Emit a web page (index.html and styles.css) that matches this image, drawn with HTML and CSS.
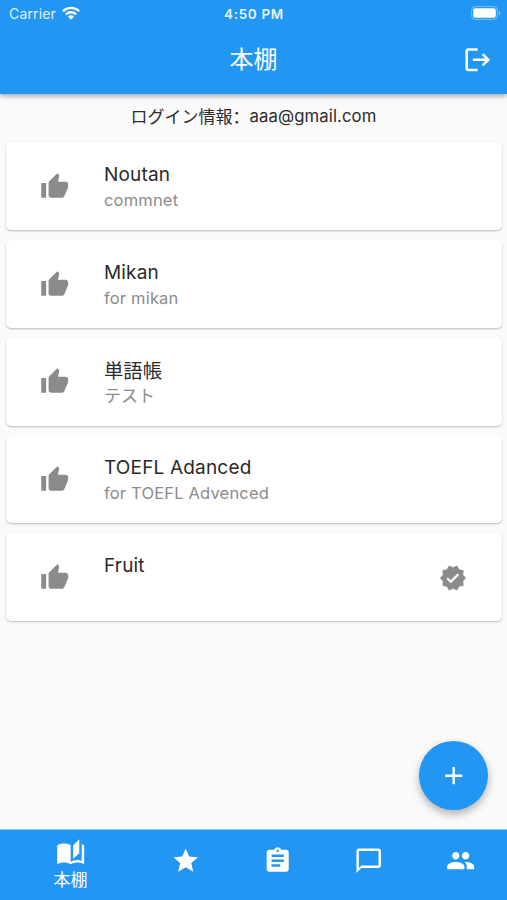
FILE: index.html
```html
<!DOCTYPE html>
<html lang="ja">
<head>
<meta charset="utf-8">
<title>本棚</title>
<link rel="stylesheet" href="styles.css">
</head>
<body>
<svg width="0" height="0" class="defs">
  <symbol id="thumb" viewBox="0 0 24 24"><path d="M1 21h4V9H1v12zm22-11c0-1.1-.9-2-2-2h-6.31l.95-4.57.03-.32c0-.41-.17-.79-.44-1.06L14.17 1 7.59 7.59C7.22 7.95 7 8.45 7 9v10c0 1.1.9 2 2 2h9c.83 0 1.54-.5 1.84-1.22l3.02-7.05c.09-.23.14-.47.14-.73v-2z"/></symbol>
</svg>
<div class="screen">
  <header class="header">
    <div class="status">
      <div class="carrier"><span>Carrier</span>
        <svg class="wifi" viewBox="0 0 18 14"><g fill="none" stroke="#fff" stroke-width="2.3"><path d="M.9 5.3a11.5 11.5 0 0 1 16.2 0"/><path d="M3.8 8.4a7.4 7.4 0 0 1 10.4 0"/></g><path d="M9 13.8l-3-3.1a4.3 4.3 0 0 1 6 0z" fill="#fff"/></svg>
      </div>
      <div class="clock">4:50 PM</div>
      <svg class="battery" viewBox="0 0 30 14"><rect x=".6" y=".6" width="25.8" height="12.8" rx="3.8" fill="none" stroke="#fff" stroke-opacity=".4" stroke-width="1"/><rect x="2.2" y="2.2" width="22.6" height="9.6" rx="2.2" fill="#fff"/><path d="M27.8 4.8c2 .8 2 3.6 0 4.4z" fill="#fff" fill-opacity=".45"/></svg>
    </div>
    <div class="bar">
      <h1 class="title">本棚</h1>
      <svg class="logout" viewBox="0 0 26 24" fill="none" stroke="#fff" stroke-width="2.5" stroke-linejoin="round"><path d="M13.6 1.6H4.2Q2.7 1.6 2.7 3.1v17.4q0 1.5 1.5 1.5h9.4"/><path d="M8.8 11.8H24.6M18.6 6.2l5.8 5.6-5.8 5.6"/></svg>
    </div>
  </header>
  <main class="content">
    <p class="login"><span class="label">ログイン情報<span class="colon" lang="zh-CN">：</span></span><span class="mail">aaa@gmail.com</span></p>
    <ul class="list">
      <li class="card"><svg class="thumb"><use href="#thumb"/></svg><div class="text"><div class="name">Noutan</div><div class="note">commnet</div></div></li>
      <li class="card"><svg class="thumb"><use href="#thumb"/></svg><div class="text"><div class="name">Mikan</div><div class="note">for mikan</div></div></li>
      <li class="card"><svg class="thumb"><use href="#thumb"/></svg><div class="text"><div class="name cjk">単語帳</div><div class="note cjk">テスト</div></div></li>
      <li class="card"><svg class="thumb"><use href="#thumb"/></svg><div class="text"><div class="name">TOEFL Adanced</div><div class="note">for TOEFL Advenced</div></div></li>
      <li class="card"><svg class="thumb"><use href="#thumb"/></svg><div class="text"><div class="name">Fruit</div><div class="note"></div></div>
        <svg class="verified" viewBox="0 0 24 24"><path fill-rule="evenodd" d="M23 12l-2.44-2.79.34-3.69-3.61-.82-1.89-3.2L12 2.96 8.6 1.5 6.71 4.69 3.1 5.5l.34 3.7L1 12l2.44 2.79-.34 3.7 3.61.82L8.6 22.5l3.4-1.47 3.4 1.46 1.89-3.19 3.61-.82-.34-3.69L23 12zm-12.91 4.72l-3.8-3.81 1.48-1.48 2.32 2.33 5.85-5.87 1.48 1.48-7.33 7.35z"/></svg>
      </li>
    </ul>
    <button class="fab" aria-label="追加"><svg viewBox="0 0 24 24"><path d="M19 13h-6v6h-2v-6H5v-2h6V5h2v6h6v2z"/></svg></button>
  </main>
  <nav class="nav">
    <div class="tab active"><svg viewBox="0 0 24 24"><path d="M19 1l-5 5v11l5-4.5V1zM1 6v14.65c0 .25.25.5.5.5.1 0 .15-.05.25-.05C3.1 20.45 5.05 20 6.5 20c1.95 0 4.05.4 5.5 1.5V6c-1.45-1.1-3.55-1.5-5.5-1.5S2.45 4.9 1 6zm22 13.5V6c-.6-.45-1.25-.75-2-1v13.5c-1.1-.35-2.3-.5-3.5-.5-1.7 0-4.15.65-5.5 1.5v2c1.35-.85 3.8-1.5 5.5-1.5 1.65 0 3.35.3 4.75 1.05.1.05.15.05.25.05.25 0 .5-.25.5-.5v-1.1z"/></svg><span>本棚</span></div>
    <div class="tab"><svg viewBox="0 0 24 24"><path d="M12 17.27L18.18 21l-1.64-7.03L22 9.24l-7.19-.61L12 2 9.19 8.63 2 9.24l5.46 4.73L5.82 21z"/></svg></div>
    <div class="tab"><svg viewBox="0 0 24 24"><path d="M19 3h-4.18C14.4 1.84 13.3 1 12 1c-1.3 0-2.4.84-2.82 2H5c-1.1 0-2 .9-2 2v14c0 1.1.9 2 2 2h14c1.1 0 2-.9 2-2V5c0-1.1-.9-2-2-2zm-7 0c.55 0 1 .45 1 1s-.45 1-1 1-1-.45-1-1 .45-1 1-1zm2 14H7v-2h7v2zm3-4H7v-2h10v2zm0-4H7V7h10v2z"/></svg></div>
    <div class="tab"><svg viewBox="0 0 24 24"><path d="M20 2H4c-1.1 0-2 .9-2 2v18l4-4h14c1.1 0 2-.9 2-2V4c0-1.1-.9-2-2-2zm0 14H6l-2 2V4h16v12z"/></svg></div>
    <div class="tab"><svg viewBox="0 0 24 24"><path d="M16 11c1.66 0 2.99-1.34 2.99-3S17.66 5 16 5c-1.66 0-3 1.34-3 3s1.34 3 3 3zm-8 0c1.66 0 2.99-1.34 2.99-3S9.66 5 8 5C6.34 5 5 6.34 5 8s1.34 3 3 3zm0 2c-2.33 0-7 1.17-7 3.5V19h14v-2.5c0-2.33-4.67-3.5-7-3.5zm8 0c-.29 0-.62.02-.97.05 1.16.84 1.97 1.97 1.97 3.45V19h6v-2.5c0-2.33-4.67-3.5-7-3.5z"/></svg></div>
  </nav>
</div>
</body>
</html>
```
FILE: styles.css
```css
* { box-sizing: border-box; margin: 0; padding: 0; }
body { font-family: Inter, "Noto Sans CJK JP", sans-serif; color: #2a2a2a; background: #fafafa; }
.defs { position: absolute; }
.screen { width: 507px; height: 900px; display: flex; flex-direction: column; overflow: hidden; }
.header { height: 94px; background: #2196f3; color: #fff; box-shadow: 0 2px 5px rgba(0,0,0,.35); z-index: 1; }
.status { height: 26px; padding: 1px 6px 0 9px; display: grid; grid-template-columns: 1fr auto 1fr; align-items: center; font-size: 14px; }
.carrier { display: flex; align-items: center; gap: 6px; letter-spacing: .15px; color: #e3f2fe; }
.wifi { width: 18px; height: 14px; margin-top: -2px; }
.clock { font-size: 13.5px; font-weight: 600; letter-spacing: .65px; color: #eaf5ff; margin-left: -2px; }
.battery { width: 30px; height: 14px; justify-self: end; margin-top: -1px; }
.bar { height: 68px; padding: 0 17px 0 0; display: grid; grid-template-columns: 1fr auto 1fr; align-items: center; }
.title { grid-column: 2; font-size: 24px; font-weight: 400; line-height: 36px; padding-left: 17px; }
.logout { width: 26px; height: 24px; justify-self: end; }
.content { flex: 1; position: relative; }
.login { height: 48px; display: flex; justify-content: center; font-size: 16.7px; line-height: 44px; }
.label { font-size: 17px; }
.colon { font-family: "Noto Sans CJK SC", sans-serif; }
.mail { letter-spacing: .1px; }
.list { list-style: none; padding: 0 5px 0 6px; display: grid; gap: 9.8px; }
.card { height: 88px; border-radius: 5px; background: #fff; box-shadow: 0 1px 2px rgba(0,0,0,.25); display: flex; align-items: center; padding: 0 35.5px 0 34px; }
.thumb { width: 29.4px; height: 29.4px; fill: #8b8b8b; flex: none; margin-top: 1px; }
.text { flex: 1; margin-left: 34.6px; padding-top: 2px; }
.name { font-size: 19px; line-height: 26px; letter-spacing: .18px; }
.note { font-size: 16.5px; line-height: 24px; height: 24px; letter-spacing: .18px; color: #8b8b8b; }
.name.cjk { font-size: 19.4px; letter-spacing: 0; }
.note.cjk { font-size: 17px; letter-spacing: 0; }
.verified { width: 28px; height: 28px; fill: #8b8b8b; stroke: #8b8b8b; stroke-width: .3; stroke-linejoin: round; margin-top: 1px; }
.fab { position: absolute; right: 19.5px; bottom: 19px; width: 68.6px; height: 68.6px; border: 0; border-radius: 50%; background: #2196f3; box-shadow: 0 4px 8px rgba(0,0,0,.3); display: grid; place-items: center; }
.fab svg { width: 29.4px; height: 29.4px; fill: #fff; }
.nav { height: 71.5px; background: #2196f3; border-top: 1px solid #90caf9; display: flex; color: #fff; }
.tab { flex: 1; display: flex; flex-direction: column; align-items: center; padding-top: 16.5px; }
.tab svg { width: 29.4px; height: 29.4px; fill: #fff; }
.tab.active { flex: 1.5; padding-top: 8px; padding-left: 1.5px; }
.tab span { font-size: 17px; line-height: 24px; margin-top: 1px; }
```
